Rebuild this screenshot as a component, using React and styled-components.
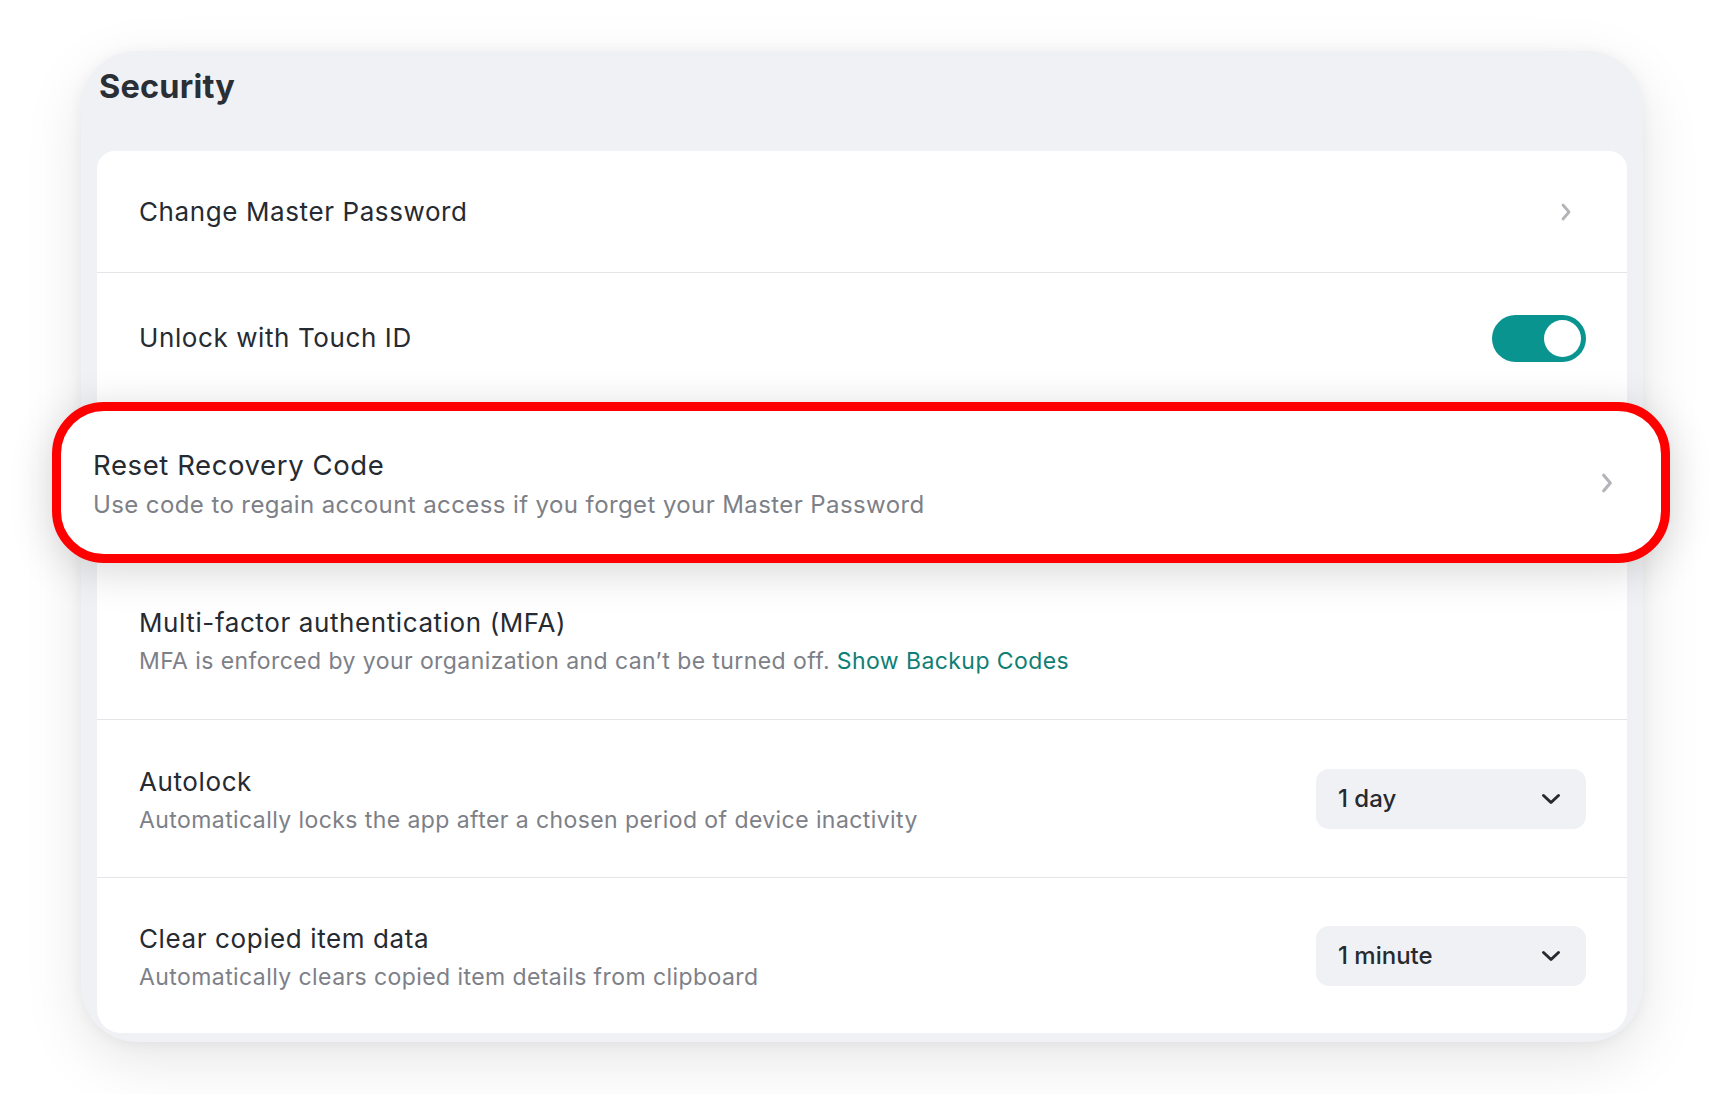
import styled, { createGlobalStyle } from "styled-components";

// 보안 설정 패널 - 한 줄을 강조(빨간 테두리)해서 보여주는 화면

const GlobalStyle = createGlobalStyle`
  html, body {
    margin: 0;
    padding: 0;
    background: #ffffff;
    font-family: "Inter", "Noto Sans", sans-serif;
    -webkit-font-smoothing: antialiased;
  }
`;

const Page = styled.div`
  padding: 51px 79px 52px 81px;
`;

const Panel = styled.section`
  background: #f0f1f4;
  border-radius: 56px;
  padding: 0 16px 9px 16px;
  box-shadow: 0 18px 60px rgba(0, 0, 0, 0.1), 0 2px 14px rgba(0, 0, 0, 0.05);
`;

const Header = styled.header`
  height: 100px;
  padding: 16px 0 0 2px;
  box-sizing: border-box;
`;

const Title = styled.h1`
  margin: 0;
  font-size: 32.5px;
  line-height: 40px;
  font-weight: 700;
  letter-spacing: 0.2px;
  color: #2a2e35;
`;

const Card = styled.div`
  background: #ffffff;
  border-radius: 18px 18px 24px 24px;
  display: flex;
  flex-direction: column;
`;

const Row = styled.div`
  height: ${(props) => props.h}px;
  box-sizing: border-box;
  display: flex;
  align-items: center;
  justify-content: space-between;
  padding: 0 41px 0 42px;
  border-bottom: ${(props) => (props.last ? "none" : "1.5px solid #e4e5e8")};
`;

const Texts = styled.div`
  display: flex;
  flex-direction: column;
  padding-top: ${(props) => props.shift || 0}px;
`;

const Label = styled.div`
  font-size: ${(props) => (props.big ? 27.5 : 26)}px;
  letter-spacing: 0.6px;
  line-height: 30px;
  color: #262a31;
`;

const Hint = styled.div`
  margin-top: ${(props) => (props.big ? 10 : 8)}px;
  font-size: ${(props) => (props.big ? 24 : 23)}px;
  letter-spacing: ${(props) => (props.big ? 0.4 : 0.42)}px;
  line-height: 30px;
  color: #7d8087;
`;

const Link = styled.a`
  color: #0f7f75;
  text-decoration: none;
`;

const Chevron = styled.svg`
  flex: none;
  margin-right: ${(props) => props.mr || 0}px;
`;

const Toggle = styled.div`
  width: 94px;
  height: 47px;
  border-radius: 24px;
  background: #0a9490;
  box-sizing: border-box;
  padding: 5px;
  display: flex;
  justify-content: flex-end;

  &::after {
    content: "";
    width: 37px;
    height: 37px;
    border-radius: 50%;
    background: #ffffff;
  }
`;

const Select = styled.div`
  width: 270px;
  height: 60px;
  box-sizing: border-box;
  border-radius: 13px;
  background: #f0f1f4;
  display: flex;
  align-items: center;
  justify-content: space-between;
  padding: 0 25px 0 22px;
  font-size: 24px;
  font-weight: 500;
  color: #262a31;
`;

const Slot = styled.div`
  height: 161px;
  position: relative;
`;

const Callout = styled.div`
  position: absolute;
  top: -1px;
  left: -45px;
  right: -43px;
  height: 161px;
  box-sizing: border-box;
  border: 9px solid #ff0000;
  border-radius: 52px;
  background: #ffffff;
  box-shadow: 0 8px 44px rgba(0, 0, 0, 0.16);
  display: flex;
  align-items: center;
  justify-content: space-between;
  padding: 0 48px 0 32px;
  z-index: 2;
`;

const RightArrow = ({ w = 10, h = 18, mr }) => (
  <Chevron width={w} height={h} viewBox="0 0 10 18" mr={mr}>
    <polyline
      points="2,2 8,9 2,16"
      fill="none"
      stroke="#b3b4b8"
      strokeWidth="2.8"
      strokeLinecap="round"
      strokeLinejoin="round"
    />
  </Chevron>
);

const DownArrow = () => (
  <Chevron width="20" height="12" viewBox="0 0 20 12">
    <polyline
      points="2.5,2.5 10,9.5 17.5,2.5"
      fill="none"
      stroke="#262a31"
      strokeWidth="3"
      strokeLinecap="round"
      strokeLinejoin="round"
    />
  </Chevron>
);

const App = () => {
  return (
    <>
      <GlobalStyle />
      <Page>
        <Panel>
          <Header>
            <Title>Security</Title>
          </Header>
          <Card>
            <Row h={122}>
              <Label>Change Master Password</Label>
              <RightArrow mr={15} />
            </Row>
            <Row h={130} last>
              <Label>Unlock with Touch ID</Label>
              <Toggle />
            </Row>
            <Slot>
              <Callout>
                <Texts shift={4}>
                  <Label big>Reset Recovery Code</Label>
                  <Hint big>
                    Use code to regain account access if you forget your Master
                    Password
                  </Hint>
                </Texts>
                <RightArrow w={12} h={20} />
              </Callout>
            </Slot>
            <Row h={156}>
              <Texts shift={1}>
                <Label>Multi-factor authentication (MFA)</Label>
                <Hint>
                  MFA is enforced by your organization and can’t be turned off.{" "}
                  <Link>Show Backup Codes</Link>
                </Hint>
              </Texts>
            </Row>
            <Row h={158}>
              <Texts shift={4}>
                <Label>Autolock</Label>
                <Hint>
                  Automatically locks the app after a chosen period of device
                  inactivity
                </Hint>
              </Texts>
              <Select>
                1 day
                <DownArrow />
              </Select>
            </Row>
            <Row h={155} last>
              <Texts shift={4}>
                <Label>Clear copied item data</Label>
                <Hint>Automatically clears copied item details from clipboard</Hint>
              </Texts>
              <Select>
                1 minute
                <DownArrow />
              </Select>
            </Row>
          </Card>
        </Panel>
      </Page>
    </>
  );
};

export default App;
